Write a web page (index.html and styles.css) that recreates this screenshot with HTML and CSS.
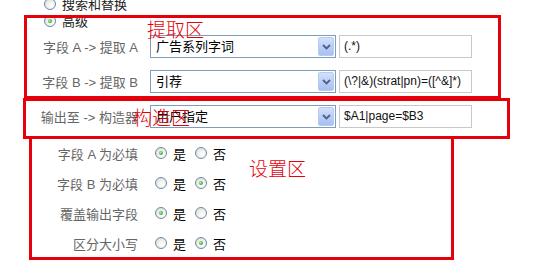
FILE: index.html
```html
<!DOCTYPE html>
<html lang="zh-CN">
<head>
<meta charset="utf-8">
<title>提取规则</title>
<link rel="stylesheet" href="styles.css">
</head>
<body>
<div class="page">
  <div class="modes">
    <label class="mode"><input type="radio" class="radio" name="mode"><span>搜索和替换</span></label>
    <label class="mode"><input type="radio" class="radio" name="mode" checked><span>高级</span></label>
  </div>

  <div class="fields">
    <div class="field-row">
      <span class="label">字段 A -&gt; 提取 A</span>
      <div class="combo"><span class="combo-text">广告系列字词</span><span class="combo-btn"><svg width="9" height="6" viewBox="0 0 9 6"><path d="M1 1 L4.5 4.5 L8 1" fill="none" stroke="#4d6185" stroke-width="1.8"/></svg></span></div>
      <div class="textbox">(.*)</div>
    </div>
    <div class="field-row">
      <span class="label">字段 B -&gt; 提取 B</span>
      <div class="combo"><span class="combo-text">引荐</span><span class="combo-btn"><svg width="9" height="6" viewBox="0 0 9 6"><path d="M1 1 L4.5 4.5 L8 1" fill="none" stroke="#4d6185" stroke-width="1.8"/></svg></span></div>
      <div class="textbox">(\?|&amp;)(strat|pn)=([^&amp;]*)</div>
    </div>
    <div class="field-row">
      <span class="label">输出至 -&gt; 构造器</span>
      <div class="combo"><span class="combo-text">用户指定</span><span class="combo-btn"><svg width="9" height="6" viewBox="0 0 9 6"><path d="M1 1 L4.5 4.5 L8 1" fill="none" stroke="#4d6185" stroke-width="1.8"/></svg></span></div>
      <div class="textbox">$A1|page=$B3</div>
    </div>
  </div>

  <div class="options">
    <div class="opt-row">
      <span class="label">字段 A 为必填</span>
      <label class="choice"><input type="radio" class="radio" name="a" checked><span>是</span></label>
      <label class="choice"><input type="radio" class="radio" name="a"><span>否</span></label>
    </div>
    <div class="opt-row">
      <span class="label">字段 B 为必填</span>
      <label class="choice"><input type="radio" class="radio" name="b"><span>是</span></label>
      <label class="choice"><input type="radio" class="radio" name="b" checked><span>否</span></label>
    </div>
    <div class="opt-row">
      <span class="label">覆盖输出字段</span>
      <label class="choice"><input type="radio" class="radio" name="c" checked><span>是</span></label>
      <label class="choice"><input type="radio" class="radio" name="c"><span>否</span></label>
    </div>
    <div class="opt-row">
      <span class="label">区分大小写</span>
      <label class="choice"><input type="radio" class="radio" name="d"><span>是</span></label>
      <label class="choice"><input type="radio" class="radio" name="d" checked><span>否</span></label>
    </div>
  </div>

  <div class="mark mark-extract"></div>
  <div class="mark mark-build"></div>
  <div class="mark mark-settings"></div>
  <span class="mark-label label-extract">提取区</span>
  <span class="mark-label label-build">构造区</span>
  <span class="mark-label label-settings">设置区</span>
</div>
</body>
</html>
```

FILE: styles.css
```css
html, body {
  margin: 0;
  padding: 0;
  background: #fff;
  overflow: hidden;
}

.page {
  position: relative;
  width: 551px;
  height: 273px;
  font-family: "Liberation Sans", "Noto Sans CJK SC", sans-serif;
  font-size: 13px;
  color: #000;
}

.modes {
  display: flex;
  flex-direction: column;
  margin-top: -5px;
  padding-left: 44px;
}

.mode {
  display: flex;
  align-items: center;
  height: 17px;
  gap: 6px;
  color: #222;
}

.radio {
  -webkit-appearance: none;
  appearance: none;
  margin: 0;
  width: 12px;
  height: 12px;
  border-radius: 50%;
  border: 1px solid #6f86a6;
  background: radial-gradient(circle at 65% 70%, #ffffff 0%, #f2f2ee 40%, #d7d7cf 100%);
  box-sizing: border-box;
  flex: none;
  position: relative;
}

.radio:checked::after {
  content: "";
  position: absolute;
  left: 3px;
  top: 3px;
  width: 4px;
  height: 4px;
  border-radius: 50%;
  background: radial-gradient(circle at 40% 40%, #b6f0a6 0%, #3cb43c 60%, #1f8f1f 100%);
}

.fields {
  display: flex;
  flex-direction: column;
  gap: 12px;
  margin-top: 6px;
}

.field-row {
  display: flex;
  align-items: center;
  height: 23px;
}

.label {
  width: 138px;
  text-align: right;
  color: #666;
  white-space: nowrap;
  flex: none;
}

.field-row .label {
  margin-right: 12px;
}

.combo {
  width: 186px;
  height: 23px;
  box-sizing: border-box;
  border: 1px solid #7f9db9;
  display: flex;
  align-items: center;
  justify-content: space-between;
  padding: 1px;
  background: #fff;
}

.combo-text {
  padding-left: 4px;
  line-height: 19px;
}

.combo-btn {
  width: 16px;
  height: 19px;
  box-sizing: border-box;
  border: 1px solid #b8cbef;
  border-radius: 2px;
  background: linear-gradient(#d3e0fd, #b7cbf6 60%, #a9bff3);
  display: flex;
  align-items: center;
  justify-content: center;
}

.textbox {
  width: 133px;
  height: 23px;
  box-sizing: border-box;
  margin-left: 3px;
  border: 1px solid #c8c8c8;
  padding-left: 4px;
  font-family: "Liberation Sans", Arial, sans-serif;
  font-size: 12px;
  line-height: 21px;
  color: #111;
  white-space: nowrap;
}

.options {
  display: flex;
  flex-direction: column;
  margin-top: 10px;
}

.opt-row {
  display: flex;
  align-items: center;
  height: 30px;
}

.opt-row .label {
  margin-right: 17px;
}

.choice {
  display: flex;
  align-items: center;
  gap: 6px;
  margin-right: 9px;
}

.mark {
  position: absolute;
  border: 3px solid #e5000c;
  box-sizing: border-box;
}

.mark-extract {
  left: 24px;
  top: 20px;
  width: 477px;
  height: 84px;
}

.mark-build {
  left: 23px;
  top: 103px;
  width: 487px;
  height: 41px;
}

.mark-settings {
  left: 29px;
  top: 141px;
  width: 425px;
  height: 124px;
}

.mark-label {
  position: absolute;
  color: #e5000c;
  font-family: "Noto Sans CJK SC", sans-serif;
  font-size: 19px;
  line-height: 20px;
  font-weight: 300;
  white-space: nowrap;
}

.label-extract {
  left: 147px;
  top: 24px;
}

.label-build {
  left: 133px;
  top: 112px;
}

.label-settings {
  left: 249px;
  top: 163px;
}
```
